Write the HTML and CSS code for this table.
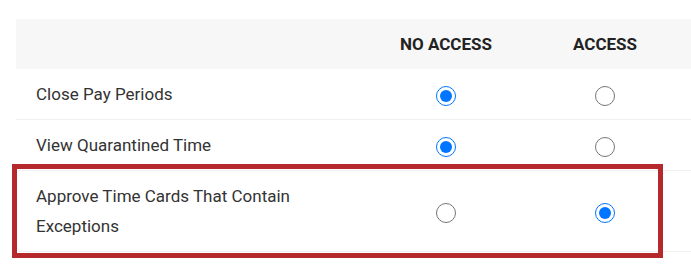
FILE: index.html
```html
<!DOCTYPE html>
<html lang="en">
<head>
    <meta charset="UTF-8">
    <meta name="viewport" content="width=device-width, initial-scale=1.0">
    <title>Permissions</title>
    <link rel="stylesheet" href="styles.css">
</head>
<body>

    <div class="perm-wrap">
        <table class="perm-table">
            <colgroup>
                <col class="col-name">
                <col class="col-no">
                <col class="col-yes">
            </colgroup>
            <thead>
                <tr>
                    <th></th>
                    <th>No Access</th>
                    <th class="cell-yes">Access</th>
                </tr>
            </thead>
            <tbody>
                <tr>
                    <td class="cell-name">Close Pay Periods</td>
                    <td><input type="radio" name="close" checked></td>
                    <td class="cell-yes"><input type="radio" name="close"></td>
                </tr>
                <tr>
                    <td class="cell-name">View Quarantined Time</td>
                    <td><input type="radio" name="quarantine" checked></td>
                    <td class="cell-yes"><input type="radio" name="quarantine"></td>
                </tr>
                <tr>
                    <td class="cell-name">Approve Time Cards That Contain Exceptions</td>
                    <td><input type="radio" name="approve"></td>
                    <td class="cell-yes"><input type="radio" name="approve" checked></td>
                </tr>
            </tbody>
        </table>

        <!-- highlight box drawn over the last row -->
        <div class="highlight"></div>
    </div>

</body>
</html>
```

FILE: styles.css
```css
body {
    margin: 0;
    min-height: 268px;
    background-color: #fff;
    font-family: Roboto, "Liberation Sans", sans-serif;
    color: #333;
}

.perm-wrap {
    position: relative;
    margin: 19px 0 0 16px;
    padding-bottom: 18px;
}

.perm-table {
    width: 675px;
    border-collapse: collapse;
    border-spacing: 0;
    table-layout: fixed;
}

.col-name {
    width: 350px;
}

.col-no {
    width: 160px;
}

.col-yes {
    width: 165px;
}

.perm-table th {
    height: 50px;
    padding: 0;
    background-color: #f7f7f7;
    font-size: 17px;
    font-weight: 700;
    text-transform: uppercase;
    color: #222;
    text-align: center;
}

.perm-table td {
    padding: 10px 0;
    font-size: 17px;
    line-height: 30px;
    border-bottom: 1px solid #f0f0f0;
    text-align: center;
    vertical-align: middle;
}

.perm-table td.cell-name {
    padding-left: 20px;
    padding-right: 40px;
    text-align: left;
}

.perm-table .cell-yes {
    padding-right: 7px;
}

.perm-table input[type="radio"] {
    width: 20px;
    height: 20px;
    margin: 0;
    vertical-align: middle;
}

.highlight {
    position: absolute;
    top: 145px;
    left: -4px;
    width: 651px;
    height: 94px;
    box-sizing: border-box;
    border: 5px solid #b5282c;
    pointer-events: none;
}
```
